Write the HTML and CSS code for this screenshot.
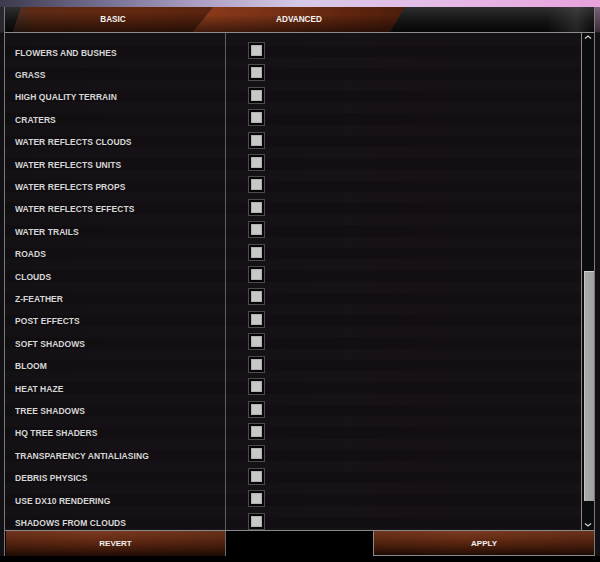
FILE: index.html
```html
<!DOCTYPE html>
<html>
<head>
<meta charset="utf-8">
<title>Advanced Settings</title>
<link rel="stylesheet" href="styles.css">
</head>
<body>
<div class="topstrip"></div>
<div class="frame">
  <div class="tabbar">
    <div class="tab tab-basic">BASIC</div>
    <div class="tab tab-adv">ADVANCED</div>
  </div>
  <div class="content">
    <div class="list">
      <div class="labels">
        <div class="row">FLOWERS AND BUSHES</div>
        <div class="row">GRASS</div>
        <div class="row">HIGH QUALITY TERRAIN</div>
        <div class="row">CRATERS</div>
        <div class="row">WATER REFLECTS CLOUDS</div>
        <div class="row">WATER REFLECTS UNITS</div>
        <div class="row">WATER REFLECTS PROPS</div>
        <div class="row">WATER REFLECTS EFFECTS</div>
        <div class="row">WATER TRAILS</div>
        <div class="row">ROADS</div>
        <div class="row">CLOUDS</div>
        <div class="row">Z-FEATHER</div>
        <div class="row">POST EFFECTS</div>
        <div class="row">SOFT SHADOWS</div>
        <div class="row">BLOOM</div>
        <div class="row">HEAT HAZE</div>
        <div class="row">TREE SHADOWS</div>
        <div class="row">HQ TREE SHADERS</div>
        <div class="row">TRANSPARENCY ANTIALIASING</div>
        <div class="row">DEBRIS PHYSICS</div>
        <div class="row">USE DX10 RENDERING</div>
        <div class="row">SHADOWS FROM CLOUDS</div>
      </div>
      <div class="boxes">
        <div class="row"><span class="cb"><i></i></span></div>
        <div class="row"><span class="cb"><i></i></span></div>
        <div class="row"><span class="cb"><i></i></span></div>
        <div class="row"><span class="cb"><i></i></span></div>
        <div class="row"><span class="cb"><i></i></span></div>
        <div class="row"><span class="cb"><i></i></span></div>
        <div class="row"><span class="cb"><i></i></span></div>
        <div class="row"><span class="cb"><i></i></span></div>
        <div class="row"><span class="cb"><i></i></span></div>
        <div class="row"><span class="cb"><i></i></span></div>
        <div class="row"><span class="cb"><i></i></span></div>
        <div class="row"><span class="cb"><i></i></span></div>
        <div class="row"><span class="cb"><i></i></span></div>
        <div class="row"><span class="cb"><i></i></span></div>
        <div class="row"><span class="cb"><i></i></span></div>
        <div class="row"><span class="cb"><i></i></span></div>
        <div class="row"><span class="cb"><i></i></span></div>
        <div class="row"><span class="cb"><i></i></span></div>
        <div class="row"><span class="cb"><i></i></span></div>
        <div class="row"><span class="cb"><i></i></span></div>
        <div class="row"><span class="cb"><i></i></span></div>
        <div class="row"><span class="cb"><i></i></span></div>
      </div>
    </div>
    <div class="scroll">
      <svg class="arrow" width="12" height="6" viewBox="0 0 12 6"><path d="M3 4.5 L6 2 L9 4.5" fill="none" stroke="#d0d0d0" stroke-width="1.3"/></svg>
      <div class="thumb"></div>
      <div class="spacer"></div>
      <svg class="arrow" width="12" height="6" viewBox="0 0 12 6"><path d="M3 1.5 L6 4 L9 1.5" fill="none" stroke="#d0d0d0" stroke-width="1.3"/></svg>
    </div>
  </div>
  <div class="footer">
    <div class="btn revert">REVERT</div>
    <div class="mid"></div>
    <div class="btn apply">APPLY</div>
  </div>
</div>
</body>
</html>
```
FILE: styles.css
```css
html, body {
  margin: 0;
  padding: 0;
}
body {
  width: 600px;
  height: 562px;
  overflow: hidden;
  background:
    linear-gradient(to bottom, #7a6078, #3a2c3a) 595px 7px / 5px 25px no-repeat,
    linear-gradient(to bottom, #2a282e 0, #2a282e 32px, #131015 33px, #131015 556px, #000 556px);
  font-family: "Liberation Sans", Arial, sans-serif;
  font-weight: bold;
  color: #dcdcdc;
}
.topstrip {
  height: 7px;
  background: linear-gradient(to right, #3c3a4c 0%, #6e6888 15%, #a89cc0 32%, #d6c8e6 50%, #e4bce6 72%, #e8a2dc 100%);
}
.frame {
  margin-left: 4px;
  width: 591px;
  box-sizing: border-box;
  border-left: 1px solid #7a7a7a;
  border-right: 1px solid #7a7a7a;
  display: flex;
  flex-direction: column;
}
.tabbar {
  height: 25px;
  border-bottom: 1px solid #8c8c8c;
  display: flex;
  padding-left: 8px;
  background:
    linear-gradient(to right, rgba(255,255,255,0) 92%, rgba(90,90,90,.35) 97%, rgba(255,255,255,0) 100%),
    linear-gradient(to bottom, #2e2e30 0%, #161616 50%, #060606 100%);
}
.tab {
  height: 25px;
  display: flex;
  align-items: center;
  justify-content: center;
  font-size: 8.2px;
  color: #f2f2f2;
}
.tab-basic {
  width: 200px;
  clip-path: polygon(8px 0, 100% 0, calc(100% - 20px) 100%, 0 100%);
  background:
    linear-gradient(to bottom, rgba(0,0,0,0) 20%, rgba(0,0,0,.6) 100%),
    linear-gradient(to right, #4a3028 0%, #5e2a14 10%, #642810 60%, #5a240e 100%);
}
.tab-adv {
  width: 212px;
  margin-left: -20px;
  clip-path: polygon(20px 0, 100% 0, calc(100% - 15px) 100%, 0 100%);
  background:
    linear-gradient(to bottom, rgba(0,0,0,0) 30%, rgba(0,0,0,.55) 100%),
    linear-gradient(to right, #8e3c1a 0%, #7a3216 35%, #5e240e 75%, #4e1e0c 100%);
}
.content {
  height: 497px;
  display: flex;
  border-bottom: 1px solid #8a8a8a;
}
.list {
  flex: 1;
  display: grid;
  grid-template-columns: 220px 1fr;
  overflow: hidden;
  background:
    repeating-linear-gradient(to bottom, rgba(0,0,0,0) 0, rgba(0,0,0,0) 11px, rgba(0,0,0,.16) 11px, rgba(0,0,0,.16) 22.42px),
    linear-gradient(to right, #141115 0%, #171118 60%, #151115 100%);
  background-position: 0 2px, 0 0;
}
.labels, .boxes {
  padding-top: 8.3px;
  display: flex;
  flex-direction: column;
}
.boxes {
  border-left: 1px solid #606060;
  padding-left: 22px;
}
.row {
  height: 22.42px;
  flex: none;
  display: flex;
  align-items: center;
}
.labels .row {
  padding-left: 10px;
  font-size: 8.5px;
  color: #d6d6d6;
  letter-spacing: 0.05px;
  white-space: nowrap;
}
.cb {
  width: 17px;
  height: 17px;
  box-sizing: border-box;
  border: 1px solid #4c4c4c;
  background: #050505;
  padding: 2px;
  margin-bottom: 4px;
}
.cb i {
  display: block;
  width: 11px;
  height: 11px;
  background: #c8c8c8;
  box-shadow: inset 0 0 0 1px #b0b0b0;
}
.scroll {
  width: 13px;
  box-sizing: border-box;
  border-left: 1px solid #8a8a8a;
  background: #0c0b0d;
  display: flex;
  flex-direction: column;
  align-items: center;
}
.arrow {
  display: block;
  flex: none;
  margin-top: 1px;
}
.arrow:last-child {
  margin-top: 0;
  margin-bottom: 2px;
}
.thumb {
  width: 10px;
  height: 230px;
  margin-top: 231px;
  margin-left: 1px;
  background: linear-gradient(to right, #c4c4c4 0, #c4c4c4 1px, #a9a9a9 1px, #a2a2a2 100%);
  box-shadow: inset 0 1px 0 #d0d0d0;
}
.spacer {
  flex: 1;
}
.footer {
  height: 25px;
  display: flex;
  background: #000;
}
.btn {
  display: flex;
  align-items: center;
  justify-content: center;
  font-size: 8px;
  color: #f0f0f0;
  box-sizing: border-box;
  background:
    linear-gradient(to right, rgba(0,0,0,.1), rgba(255,255,255,0) 40%, rgba(0,0,0,.15)),
    linear-gradient(to bottom, #7a3a20 0%, #6a2e16 30%, #4a1e0c 65%, #200c05 100%);
}
.revert {
  width: 219px;
  margin-left: 1px;
}
.mid {
  width: 148px;
  border-left: 1px solid #6a6a6a;
  box-sizing: border-box;
}
.apply {
  flex: 1;
  border-left: 1px solid #8a8a8a;
  border-bottom: 1px solid #8a8a8a;
}
```
